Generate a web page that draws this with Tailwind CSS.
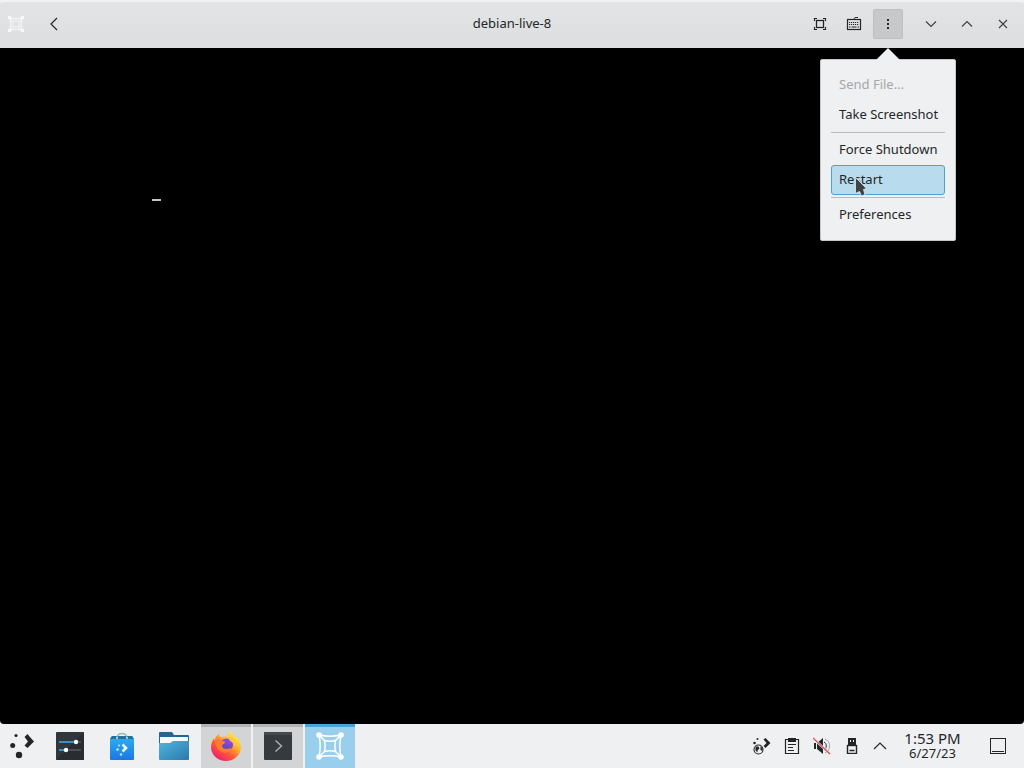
<!DOCTYPE html>
<html lang="en">
<head>
    <meta charset="UTF-8">
    <meta name="viewport" content="width=device-width, initial-scale=1.0">
    <title>debian-live-8</title>
    <script src="https://cdn.jsdelivr.net/npm/@tailwindcss/browser@4"></script>
</head>
<body class="h-screen flex flex-col overflow-hidden bg-[#eff0f1] text-[#232629] text-[13px] font-['Noto_Sans',sans-serif]">

    <!-- Window -->
    <div class="flex-1 flex flex-col">
        <header class="h-12 grid grid-cols-[1fr_auto_1fr] items-center rounded-t-sm border-t-2 border-[#f1f2f3] bg-linear-to-b from-[#e2e4e6] to-[#dcdee0] pb-[2px]">
            <div class="flex items-center pl-2 gap-4">
                <svg class="w-4 h-4" viewBox="0 0 16 16" fill="none" stroke="#f4f5f5" stroke-width="1.2">
                    <path d="M1.500 1.500c4 1.300 9 1.300 13 0M1.500 14.500c4-1.300 9-1.300 13 0M1.500 1.500c1.300 4 1.300 9 0 13M14.500 1.500c-1.300 4-1.300 9 0 13M5 5h6v6H5zM2 2l3 3M14 2l-3 3M2 14l3-3M14 14l-3-3"/>
                    <path d="M0 0h3v3H0zM13 0h3v3h-3zM0 13h3v3H0zM13 13h3v3h-3z" fill="#f7f8f8" stroke="none"/>
                </svg>
                <button class="w-7 h-7 flex items-center justify-center" aria-label="Back">
                    <svg class="w-4 h-4" viewBox="0 0 16 16" fill="none" stroke="#232629" stroke-width="1.2"><path d="M11 2L5 8l6 6"/></svg>
                </button>
            </div>

            <h1>debian-live-8</h1>

            <div class="flex items-center justify-end pr-[3px]">
                <div class="flex gap-1 mr-[10px]">
                    <button class="w-[30px] h-[30px] flex items-center justify-center" aria-label="Fullscreen">
                        <svg class="w-4 h-4" viewBox="0 0 16 16" fill="none" stroke="#232629">
                            <rect x="4.500" y="4.500" width="7" height="7" stroke-width="1.300"/>
                            <path d="M2.500 5V2.500H5M11 2.500h2.500V5M13.500 11v2.500H11M5 13.500H2.500V11" stroke-width="1.200"/>
                        </svg>
                    </button>
                    <button class="w-[30px] h-[30px] flex items-center justify-center" aria-label="Keyboard">
                        <svg class="w-4 h-4" viewBox="0 0 16 16" fill="none" stroke="#232629">
                            <rect x="1.500" y="3.500" width="13" height="10" stroke-width="1.200"/>
                            <path d="M8 3.500C8 1.500 9 1.500 12 1.500"/>
                            <path d="M3 6.500h10M3 8.500h10" stroke-dasharray="1.200 0.800"/>
                            <path d="M3 11h1.500M5.500 11h5M11.500 11H13" stroke-width="1.200"/>
                        </svg>
                    </button>
                    <div class="relative">
                        <button class="w-[30px] h-[30px] flex items-center justify-center bg-[#c6c8ca] border border-[#bdbfc1] rounded-xs" aria-label="Menu" aria-expanded="true">
                            <svg class="w-4 h-4" viewBox="0 0 16 16" fill="#232629"><path d="M7 3h2v2H7zM7 7h2v2H7zM7 11h2v2H7z"/></svg>
                        </button>

                        <!-- Dropdown -->
                        <div role="menu" class="absolute z-10 top-[50px] left-1/2 -translate-x-1/2 w-[136px] p-[10px] flex flex-col bg-[#eff0f1] border border-[#c4c6c8] rounded-xs">
                            <svg class="absolute -top-3 left-1/2 -translate-x-1/2 w-6 h-3" viewBox="0 0 24 12" fill="#eff0f1"><path d="M0 12L12 0l12 12z"/></svg>
                            <button role="menuitem" disabled class="h-[30px] px-2 text-left text-[#a5a7a9]">Send File…</button>
                            <button role="menuitem" class="h-[30px] px-2 text-left whitespace-nowrap">Take Screenshot</button>
                            <hr class="my-[2px] border-[#b9bbbd]">
                            <button role="menuitem" class="h-[30px] px-2 text-left whitespace-nowrap">Force Shutdown</button>
                            <div class="relative flex">
                                <button role="menuitem" class="flex-1 h-[30px] px-[7px] text-left bg-[#b8dcee] border border-[#4ba3c9] rounded-[3px]">Restart</button>
                                <svg class="absolute left-6 top-3 w-3 h-5" viewBox="0 0 12 20" fill="#3f4347" stroke="#e8ecee" stroke-width="0.800"><path d="M0.500 0.500L11.500 11.500 8.500 12.500 10 17.500 6.500 19 4.500 14.500 0.500 16.500z"/></svg>
                            </div>
                            <hr class="my-[2px] border-[#b9bbbd]">
                            <button role="menuitem" class="h-[30px] px-2 text-left">Preferences</button>
                        </div>
                    </div>
                </div>
                <button class="w-9 h-9 flex items-center justify-center" aria-label="Minimize">
                    <svg class="w-4 h-4" viewBox="0 0 16 16" fill="none" stroke="#3b3e41" stroke-width="1.100"><path d="M3 5.500l5 5 5-5"/></svg>
                </button>
                <button class="w-9 h-9 flex items-center justify-center" aria-label="Maximize">
                    <svg class="w-4 h-4" viewBox="0 0 16 16" fill="none" stroke="#3b3e41" stroke-width="1.100"><path d="M3 10.500l5-5 5 5"/></svg>
                </button>
                <button class="w-9 h-9 flex items-center justify-center" aria-label="Close">
                    <svg class="w-4 h-4" viewBox="0 0 16 16" fill="none" stroke="#3b3e41" stroke-width="1.100"><path d="M4 4l8 8M12 4l-8 8"/></svg>
                </button>
            </div>
        </header>

        <!-- Machine display -->
        <main class="flex-1 bg-black rounded-b-[4px] pt-[151px] pl-[152px]">
            <div class="w-[9px] h-[2px] bg-[#c4c4c4]"></div>
        </main>
    </div>

    <!-- Panel -->
    <footer class="h-11 flex items-stretch justify-between">
        <nav class="flex gap-[2px]">
            <button class="w-[43px] flex items-center justify-center" aria-label="Application launcher">
                <svg class="w-6 h-7" viewBox="0 0 24 28" fill="#232629">
                    <circle cx="6" cy="3.500" r="1.600"/><circle cx="2.700" cy="13.500" r="2.500"/><circle cx="9" cy="23" r="3.200"/>
                    <path d="M14.500 5l3-3 2 2.500L24 9.500l-6.500 6.500-3-2.500 3.500-4z"/>
                </svg>
            </button>
            <button class="w-[50px] flex items-center justify-center" aria-label="System Settings">
                <svg class="w-7 h-7" viewBox="0 0 28 28">
                    <rect width="28" height="28" rx="1" fill="#31363b"/><path d="M0 28L28 0v28z" fill="#292d31"/>
                    <path d="M3 10h15M3 18h7" stroke="#3daee9" stroke-width="1.500"/><path d="M18 10h7M10 18h15" stroke="#6b7074" stroke-width="1.200"/>
                    <circle cx="20" cy="10" r="2.200" fill="#fff"/><circle cx="10" cy="18" r="2.200" fill="#fff"/>
                </svg>
            </button>
            <button class="w-[50px] flex items-center justify-center" aria-label="Discover">
                <svg class="w-6 h-7" viewBox="0 0 24 28">
                    <defs><linearGradient id="bag" x1="0" y1="0" x2="0" y2="1"><stop offset="0" stop-color="#2fb0f0"/><stop offset="1" stop-color="#1b78e6"/></linearGradient></defs>
                    <path d="M7 6c0-6 10-6 10 0" fill="none" stroke="#9cb9b8" stroke-width="1.400"/>
                    <path d="M2 4h20l2 3v20a1 1 0 0 1-1 1H1a1 1 0 0 1-1-1V7z" fill="url(#bag)"/>
                    <path d="M2 4h20l2 3H0z" fill="#26709a"/>
                    <path d="M7 6c0-6 10-6 10 0" fill="none" stroke="#9cb9b8" stroke-width="1.200"/>
                    <circle cx="7" cy="6" r="1" fill="#b9dff1"/><circle cx="17" cy="6" r="1" fill="#b9dff1"/>
                    <path d="M12.500 12.500l3.500 3.500-3.500 3.500" fill="none" stroke="#e7f8ff" stroke-width="2.600"/>
                    <circle cx="9" cy="13.500" r="1" fill="#bdeaff"/><circle cx="7.500" cy="17.500" r="1.300" fill="#bdeaff"/><circle cx="11" cy="22.500" r="1.200" fill="#bdeaff"/>
                </svg>
            </button>
            <button class="w-[50px] flex items-center justify-center" aria-label="Files">
                <svg class="w-[30px] h-7" viewBox="0 0 30 28">
                    <defs><linearGradient id="folder" x1="0" y1="0" x2="1" y2="1"><stop offset="0" stop-color="#52b4e2"/><stop offset="1" stop-color="#2a79a8"/></linearGradient></defs>
                    <path d="M1 0h12l2 3h14a1 1 0 0 1 1 1v10H0V1a1 1 0 0 1 1-1z" fill="#24678f"/>
                    <path d="M1 5h28v8H1z" fill="#f6f8f9"/>
                    <path d="M0 11h11l3-2h16v18a1 1 0 0 1-1 1H1a1 1 0 0 1-1-1z" fill="url(#folder)"/>
                </svg>
            </button>
            <button class="w-[50px] flex items-center justify-center bg-[#d3d4d6] border-t-3 border-[#b1b3b5] pb-[3px]" aria-label="Firefox">
                <svg class="w-[30px] h-8" viewBox="0 0 30 32">
                    <defs>
                        <linearGradient id="fox" x1="0.850" y1="0.100" x2="0.200" y2="0.950"><stop offset="0" stop-color="#fff04a"/><stop offset="0.350" stop-color="#ffb02e"/><stop offset="0.650" stop-color="#ff5638"/><stop offset="1" stop-color="#e91e72"/></linearGradient>
                        <linearGradient id="globe" x1="0.800" y1="0" x2="0.300" y2="1"><stop offset="0" stop-color="#a04be0"/><stop offset="1" stop-color="#4a45c4"/></linearGradient>
                    </defs>
                    <path d="M18 1c3 2 4 4 5 6 1 0 2 0 2-1 3 4 5 7 5 11 0 8-7 14-15 14S0 25 0 17c0-4 2-7 3-9 0 1 0 2 1 2 0-3 2-5 4-6 0 2 1 3 3 3 2-1 4-1 6 0 0-2 0-4 1-6z" fill="url(#fox)"/>
                    <circle cx="15.500" cy="15" r="6.500" fill="url(#globe)"/>
                    <path d="M4 10c3-2 6-1 7 1 2 0 3 0 3 1 0 2-2 2-3 3 0 3 2 4 4 4 3 0 4-1 6-1-2 4-6 6-10 4-5-2-7-7-7-12z" fill="#ff7c2c"/>
                    <path d="M17 7c5 1 8 5 7 10-1-3-2-5-5-6z" fill="#ffc63c"/>
                </svg>
            </button>
            <button class="w-[50px] flex items-center justify-center bg-[#d3d4d6] border-t-3 border-[#b1b3b5] pb-[3px]" aria-label="Terminal">
                <svg class="w-7 h-7" viewBox="0 0 28 28">
                    <rect width="28" height="28" rx="1" fill="#343a3d"/><path d="M0 1a1 1 0 0 1 1-1h26a1 1 0 0 1 1 1v2H0z" fill="#43494c"/>
                    <path d="M11.500 8.500l6 5.500-6 5.500" fill="none" stroke="#a9adaf" stroke-width="1.500"/>
                </svg>
            </button>
            <button class="w-[50px] flex items-center justify-center bg-[#99cfec] border-t-3 border-[#46a7d6] pb-[3px]" aria-label="Boxes">
                <svg class="w-7 h-7" viewBox="0 0 28 28" fill="none" stroke="#fff" stroke-width="1.500">
                    <path d="M3 3c7 1.500 15 1.500 22 0M3 25c7-1.500 15-1.500 22 0M3 3c1.500 7 1.500 15 0 22M25 3c-1.500 7-1.500 15 0 22"/>
                    <path d="M3 3l6 6M25 3l-6 6M3 25l6-6M25 25l-6-6"/>
                    <path d="M8.500 8.500c4 1 7 1 11 0-1 4-1 7 0 11-4-1-7-1-11 0 1-4 1-7 0-11z"/>
                    <g fill="#fff" stroke="none"><circle cx="3" cy="3" r="2.800"/><circle cx="25" cy="3" r="2.800"/><circle cx="3" cy="25" r="2.800"/><circle cx="25" cy="25" r="2.800"/></g>
                </svg>
            </button>
        </nav>

        <div class="flex items-center">
            <button class="w-[30px] h-11 flex items-center justify-center" aria-label="Updates">
                <svg class="w-[18px] h-[18px]" viewBox="0 0 18 18" fill="#232629">
                    <circle cx="4.500" cy="2" r="1"/><circle cx="1.500" cy="6" r="1.300"/>
                    <path d="M10.500 2.500l2-1.500 5 5-5 5-2-2 3-3z"/>
                    <circle cx="5.500" cy="12.500" r="4.500" fill="none" stroke="#232629" stroke-width="1.100"/>
                    <path d="M2.500 9.500l3 0 1 2-2 2 0 2-2-2zM7.500 9l2 2v3l-2-1z"/>
                </svg>
            </button>
            <button class="w-[30px] h-11 flex items-center justify-center" aria-label="Clipboard">
                <svg class="w-4 h-4" viewBox="0 0 16 16" fill="none" stroke="#232629">
                    <path d="M1.500 1.500h13v14h-13z" stroke-width="1.200"/>
                    <path d="M4 0h8v4H4z" fill="#232629" stroke="none"/>
                    <path d="M4 6.500h8M4 9.500h5M4 12.500h6" />
                </svg>
            </button>
            <button class="w-[30px] h-11 flex items-center justify-center" aria-label="Volume muted">
                <svg class="w-[18px] h-[18px]" viewBox="0 0 18 18" fill="none">
                    <path d="M1 6h2v6H1zM4 6l6-5v16l-6-5z" fill="#232629"/>
                    <path d="M11 5c3 1 3 7 0 8" stroke="#232629"/><path d="M12 2c6 2 6 12 0 14" stroke="#a4a6a8"/>
                    <path d="M0 1l17 16" stroke="#eff0f1" stroke-width="2.400"/><path d="M0 1l17 16" stroke="#da4453" stroke-width="1.200"/>
                </svg>
            </button>
            <button class="w-[30px] h-11 flex items-center justify-center" aria-label="Devices">
                <svg class="w-4 h-4" viewBox="0 0 16 16">
                    <path d="M4 0h8v7H4z" fill="#232629"/><path d="M6 2h1v2H6zM9 2h1v2H9z" fill="#eff0f1"/>
                    <rect x="3.500" y="7.500" width="9" height="8" fill="#eff0f1" stroke="#232629" stroke-width="1.400"/><path d="M5.500 12.500h5" stroke="#232629" stroke-width="1.500"/>
                </svg>
            </button>
            <button class="w-[26px] h-11 flex items-center justify-center" aria-label="Show hidden icons">
                <svg class="w-4 h-4" viewBox="0 0 16 16" fill="none" stroke="#232629" stroke-width="1.200"><path d="M2 11l6-6 6 6"/></svg>
            </button>
            <time class="w-[79px] text-center" datetime="2023-06-27T13:53">
                <span class="block text-[15px] leading-[15px]">1:53 PM</span>
                <span class="block text-[13px] leading-[15px]">6/27/23</span>
            </time>
            <button class="w-[52px] h-11 flex items-center justify-center" aria-label="Show desktop">
                <svg class="w-4 h-4" viewBox="0 0 16 16" fill="none" stroke="#232629"><rect x="0.500" y="0.500" width="15" height="15"/><path d="M2 13.500h12"/></svg>
            </button>
        </div>
    </footer>
</body>
</html>
